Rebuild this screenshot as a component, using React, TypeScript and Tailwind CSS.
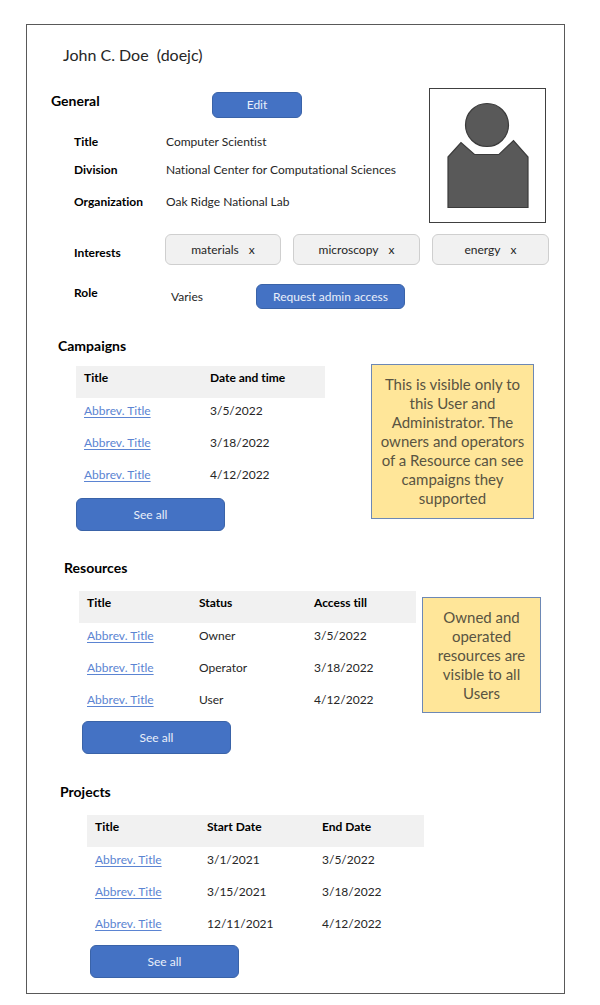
import type { ReactNode } from "react";

const buttonStyle =
  "rounded-md border border-[#3a63a8] bg-[#4472c4] text-center text-xs leading-4 text-[#e9effa]";

type Row = string[];

function DataTable({
  label,
  columns,
  rows,
  className,
  columnClasses,
}: {
  label: string;
  columns: string[];
  rows: Row[];
  className: string;
  columnClasses: string[];
}) {
  return (
    <table
      aria-label={label}
      className={`table-fixed border-collapse text-left text-xs leading-4 ${className}`}
    >
      <thead>
        <tr className="h-8 bg-[#f1f1f1]">
          {columns.map((c, i) => (
            <th key={c} className={`px-2 pt-1 pb-3 align-top font-bold text-black ${columnClasses[i]}`}>
              {c}
            </th>
          ))}
        </tr>
      </thead>
      <tbody>
        {rows.map((row, r) => (
          <tr key={r} className="h-8">
            {row.map((cell, i) => (
              <td key={i} className="px-2 pt-[5px] pb-[11px] align-top text-[#262626]">
                {i === 0 ? (
                  <a href="#" className="text-[#5b84d2] underline underline-offset-2">
                    {cell}
                  </a>
                ) : (
                  cell
                )}
              </td>
            ))}
          </tr>
        ))}
      </tbody>
    </table>
  );
}

function Note({ children, className }: { children: ReactNode; className: string }) {
  return (
    <aside
      className={`flex items-center justify-center border border-[#6d88b5] bg-[#ffe699] text-center text-[15px] leading-[19px] text-[#595442] ${className}`}
    >
      <p>{children}</p>
    </aside>
  );
}

function SeeAll({ className }: { className: string }) {
  return (
    <button type="button" className={`h-[33px] w-[149px] ${buttonStyle} ${className}`}>
      See all
    </button>
  );
}

function Tag({ name, className }: { name: string; className: string }) {
  return (
    <button
      type="button"
      aria-label={`Remove ${name}`}
      className={`flex h-[31px] items-center justify-center gap-2.5 rounded-md border border-[#cfcfcf] bg-[#f1f1f1] text-xs text-[#262626] ${className}`}
    >
      <span>{name}</span>
      <span>x</span>
    </button>
  );
}

function Avatar() {
  return (
    <div className="h-[135px] w-[117px] shrink-0 border border-[#404040]">
      <svg viewBox="0 0 115 133" className="h-full w-full" role="img" aria-label="Profile picture">
        <g fill="#595959" stroke="#3b3b3b" strokeWidth="1.2">
          <circle cx="57" cy="36" r="21.5" />
          <path d="M18 68 L31 53.500 L44.500 65.500 H69 L83.500 51.500 L98 68 V118.500 H18 Z" />
        </g>
      </svg>
    </div>
  );
}

export default function App() {
  return (
    <div className="bg-white pt-6 pr-[35px] pb-[11px] pl-[26px] font-['Lato','Liberation_Sans',sans-serif] text-[#262626] [font-variant-ligatures:none]">
      <main className="border border-[#595959] pt-[18px] pb-[15px]">
        <h1 className="pl-9 text-base leading-6 whitespace-pre">John C. Doe  (doejc)</h1>

        <section className="pt-[21px]">
          <div className="flex items-start justify-between pr-[18px] pl-6">
            <div>
              <div className="flex items-start">
                <h2 className="w-[161px] pt-px text-sm leading-6 font-bold text-black">General</h2>
                <button type="button" className={`mt-1 h-[26px] w-[90px] ${buttonStyle}`}>
                  Edit
                </button>
              </div>
              <dl className="grid grid-cols-[92px_auto] gap-y-3 pt-4 pl-[23px] text-xs leading-4">
                <dt className="font-bold text-black">Title</dt>
                <dd>Computer Scientist</dd>
                <dt className="font-bold text-black">Division</dt>
                <dd>National Center for Computational Sciences</dd>
                <dt className="pt-1 font-bold text-black">Organization</dt>
                <dd className="pt-1">Oak Ridge National Lab</dd>
              </dl>
            </div>
            <Avatar />
          </div>
          <dl className="grid grid-cols-[91px_auto] gap-y-[19px] pt-[11px] pr-[15px] pl-[47px] text-xs leading-4">
            <dt className="self-end pb-1 font-bold text-black">Interests</dt>
            <dd className="flex items-center gap-3">
              <Tag name="materials" className="w-[116px]" />
              <Tag name="microscopy" className="w-[127px]" />
              <Tag name="energy" className="w-[117px]" />
            </dd>
            <dt className="pt-px font-bold text-black">Role</dt>
            <dd className="flex items-center pl-1.5">
              <span className="w-[85px]">Varies</span>
              <button type="button" className={`h-[25px] w-[149px] ${buttonStyle}`}>
                Request admin access
              </button>
            </dd>
          </dl>
        </section>

        <section className="pt-[25px]">
          <h2 className="pl-[31px] text-sm leading-6 font-bold text-black">Campaigns</h2>
          <div className="flex items-start justify-between pt-1.5 pr-[30px] pl-[49px]">
            <div className="flex flex-col pt-0.5">
              <DataTable
                label="Campaigns"
                className="w-[249px]"
                columnClasses={["w-[126px]", ""]}
                columns={["Title", "Date and time"]}
                rows={[
                  ["Abbrev. Title", "3/5/2022"],
                  ["Abbrev. Title", "3/18/2022"],
                  ["Abbrev. Title", "4/12/2022"],
                ]}
              />
              <SeeAll className="mt-1" />
            </div>
            <Note className="h-[155px] w-[163px] px-2">
              This is visible only to this User and Administrator. The owners and operators of a Resource can
              see campaigns they supported
            </Note>
          </div>
        </section>

        <section className="pt-[25px]">
          <h2 className="pl-[37px] text-sm leading-6 font-bold text-black">Resources</h2>
          <div className="flex items-start justify-between pt-[11px] pr-[23px] pl-[52px]">
            <div className="flex flex-col">
              <DataTable
                label="Resources"
                className="w-[337px]"
                columnClasses={["w-[112px]", "w-[115px]", ""]}
                columns={["Title", "Status", "Access till"]}
                rows={[
                  ["Abbrev. Title", "Owner", "3/5/2022"],
                  ["Abbrev. Title", "Operator", "3/18/2022"],
                  ["Abbrev. Title", "User", "4/12/2022"],
                ]}
              />
              <SeeAll className="mt-0.5 ml-[3px]" />
            </div>
            <Note className="mt-1.5 h-[116px] w-[119px] px-3">
              Owned and operated resources are visible to all Users
            </Note>
          </div>
        </section>

        <section className="pt-[26px]">
          <h2 className="pl-[33px] text-sm leading-6 font-bold text-black">Projects</h2>
          <div className="flex flex-col pt-[11px] pl-[60px]">
            <DataTable
              label="Projects"
              className="w-[337px]"
              columnClasses={["w-[112px]", "w-[115px]", ""]}
              columns={["Title", "Start Date", "End Date"]}
              rows={[
                ["Abbrev. Title", "3/1/2021", "3/5/2022"],
                ["Abbrev. Title", "3/15/2021", "3/18/2022"],
                ["Abbrev. Title", "12/11/2021", "4/12/2022"],
              ]}
            />
            <SeeAll className="mt-0.5 ml-[3px]" />
          </div>
        </section>
      </main>
    </div>
  );
}
